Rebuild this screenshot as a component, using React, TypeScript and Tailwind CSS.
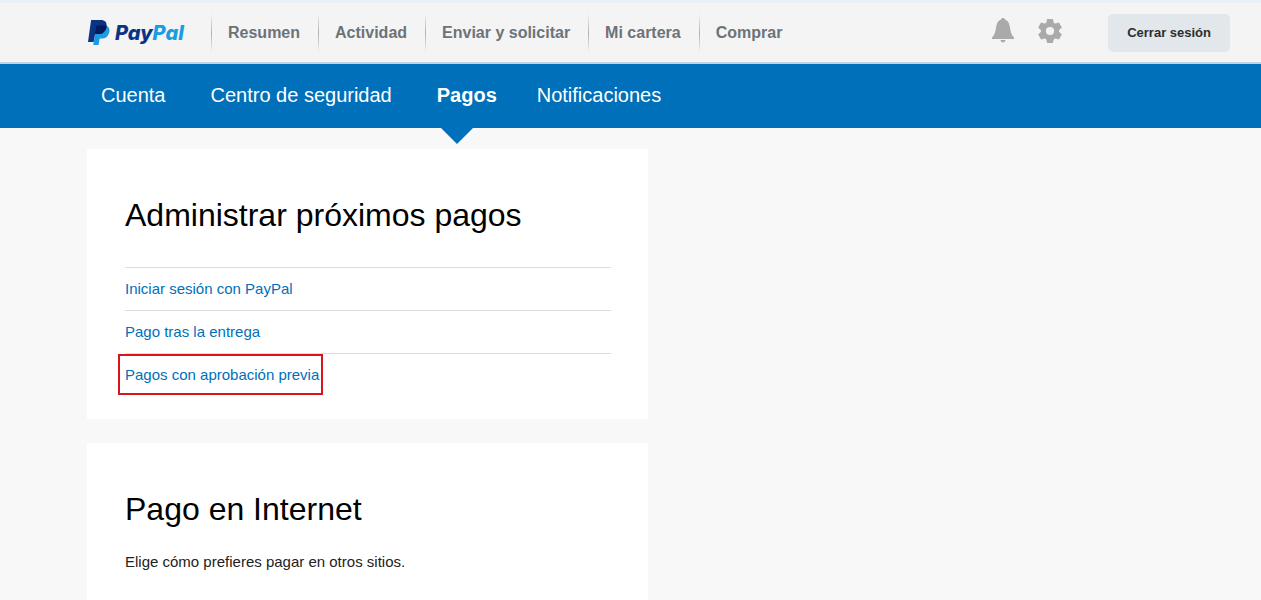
const MAIN_NAV = ['Resumen', 'Actividad', 'Enviar y solicitar', 'Mi cartera', 'Comprar']

const PAYMENT_LINKS = [
  { label: 'Iniciar sesión con PayPal', highlighted: false },
  { label: 'Pago tras la entrega', highlighted: false },
  { label: 'Pagos con aprobación previa', highlighted: true },
]

function Logo() {
  return (
    <a href="#" className="flex items-center gap-[5px] w-[123px] shrink-0">
      <svg viewBox="0 0 22 26" className="w-[22px] h-[26px] shrink-0" aria-hidden="true">
        <path
          d="M8.6 5.5h7.2c4.6 0 6.3 2.800 5.500 6.500-.9 4.300-3.700 6.600-8 6.600h-1.600L10.500 25H5.200z"
          fill="#1a9de0"
        />
        <path
          d="M3.300 0h9.200c4.600 0 6.800 2.700 6 6.900-.9 4.600-4 7.200-8.700 7.200H7.100L5.600 22H0L3 .4z"
          fill="#0b3484"
        />
        <path
          d="M8.600 5.500h7.200c1 0 1.900.1 2.700.4v1c-.9 4.600-4 7.200-8.700 7.200H7.100z"
          fill="#06195c"
        />
      </svg>
      <span className="font-['Inter','Liberation_Sans',sans-serif] text-[20px] leading-6 font-extrabold italic text-[#0b3484]">
        Pay<span className="text-[#1a9de0]">Pal</span>
      </span>
    </a>
  )
}

function BellIcon() {
  return (
    <svg viewBox="0 0 22 25" className="w-[22px] h-[25px]" fill="#aaaaaa" aria-hidden="true">
      <path d="M11 0c1.200 0 1.800.7 2 1.600 2.700 1 4.200 3.400 4.800 7.100.7 4.600 1.600 8.300 4.200 10.800V21H0v-1.500c2.600-2.500 3.500-6.200 4.200-10.800C4.800 5 6.300 2.600 9 1.600 9.200.7 9.800 0 11 0z" />
      <path d="M8.500 22h5c-.2 1.600-1.100 2.500-2.500 2.500S8.700 23.600 8.500 22z" />
    </svg>
  )
}

function GearIcon() {
  return (
    <svg viewBox="-12 -12 24 24" className="size-6" fill="#aaaaaa" aria-hidden="true">
      <circle r="6.600" fill="none" stroke="#aaaaaa" strokeWidth="5" />
      {[0, 60, 120, 180, 240, 300].map((angle) => (
        <path key={angle} d="M-3.900-7.500-2.900-12h5.800l1 4.500z" transform={`rotate(${angle})`} />
      ))}
    </svg>
  )
}

function TopBar() {
  return (
    <header className="flex h-16 items-center border-t-3 border-b-2 border-t-[#e9f1f8] border-b-[#bdd5e6] bg-[#f4f4f4] pl-[88px] pr-[31px]">
      <Logo />
      <nav className="flex items-center">
        {MAIN_NAV.map((item) => (
          <div key={item} className="flex items-center">
            <span className="h-10 w-px bg-linear-to-b from-transparent via-[#b0b0b0] to-transparent" />
            <a href="#" className="pl-4 pr-[18px] text-base leading-6 font-bold text-[#6c7378] whitespace-nowrap">
              {item}
            </a>
          </div>
        ))}
      </nav>
      <div className="ml-auto flex items-center">
        <div className="flex items-center gap-6 pb-1 pr-[46px]">
          <button type="button" aria-label="Notificaciones">
            <BellIcon />
          </button>
          <button type="button" aria-label="Configuración">
            <GearIcon />
          </button>
        </div>
        <button
          type="button"
          className="h-[38px] rounded-[5px] bg-[#e1e7eb] px-[19px] text-[13px] font-bold text-[#2c2e2f] whitespace-nowrap"
        >
          Cerrar sesión
        </button>
      </div>
    </header>
  )
}

function SubNav() {
  return (
    <nav className="flex h-16 items-center gap-[45px] bg-[#0070ba] pl-[101px] text-xl leading-10 text-white whitespace-nowrap">
      <a href="#" className="h-16 pt-[11px]">Cuenta</a>
      <a href="#" className="h-16 pt-[11px]">Centro de seguridad</a>
      <a href="#" aria-current="page" className="relative h-16 w-[55px] pt-[11px] font-bold">
        Pagos
        <svg viewBox="0 0 32 16" className="absolute left-1 top-full h-4 w-8" aria-hidden="true">
          <path d="M0 0h32L16 16z" fill="#0070ba" />
        </svg>
      </a>
      <a href="#" className="h-16 pt-[11px]">Notificaciones</a>
    </nav>
  )
}

export default function App() {
  return (
    <div className="min-h-screen bg-[#f8f8f8] font-['Liberation_Sans',Arial,sans-serif] text-black">
      <TopBar />
      <SubNav />
      <main className="flex max-w-[648px] flex-col gap-6 pl-[87px] pt-[21px]">
        <section className="bg-white pl-[38px] pr-[37px] pt-[46px] pb-[23px]">
          <h1 className="text-[32px] leading-10 pb-8">Administrar próximos pagos</h1>
          <ul>
            {PAYMENT_LINKS.map((link) => (
              <li key={link.label} className="flex h-[43px] items-center border-t border-[#dcdcdc]">
                <a href="#" className="relative text-[15px] leading-10 text-[#0070ba]">
                  {link.label}
                  {link.highlighted && (
                    <span className="absolute -left-[7px] -right-1 -top-px bottom-0 border-2 border-[#d8141c]" />
                  )}
                </a>
              </li>
            ))}
          </ul>
        </section>
        <section className="bg-white pl-[38px] pr-[37px] pt-[46px] pb-[23px]">
          <h2 className="text-[32px] leading-10 pb-4">Pago en Internet</h2>
          <p className="text-[15px] leading-[34px] text-[#222222]">Elige cómo prefieres pagar en otros sitios.</p>
        </section>
      </main>
    </div>
  )
}
